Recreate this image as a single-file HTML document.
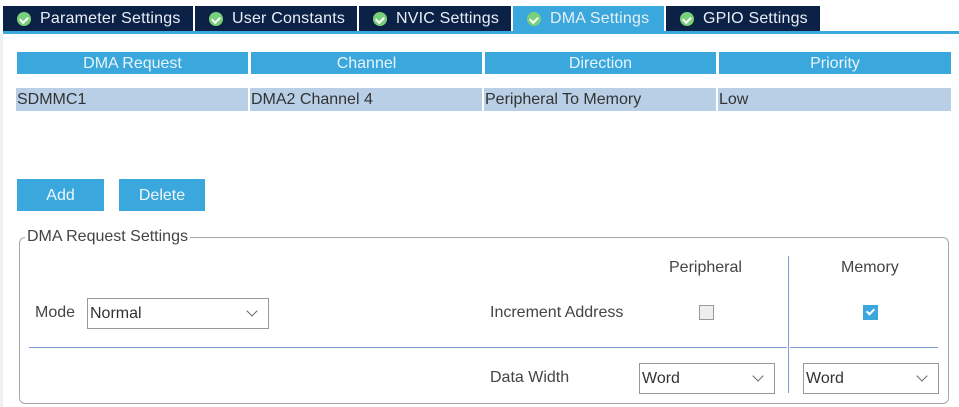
<!DOCTYPE html>
<html><head><meta charset="utf-8"><style>
*{box-sizing:border-box;margin:0;padding:0}
body{width:959px;height:407px;background:#fff;font-family:"Liberation Sans",sans-serif;position:relative;overflow:hidden;color:#333}
.a{position:absolute}
.tab{position:absolute;top:6px;height:26px;background:#0b2146;color:#e8eef5;font-size:16px;line-height:25px;padding-left:37px;white-space:nowrap;letter-spacing:0.2px}
.tab.act{background:#3aa8dc}
.ic{position:absolute;left:14px;top:6px;width:14px;height:14px;border-radius:50%;background:#7ad07a}
.ic::after{content:"";position:absolute;left:4px;top:2.5px;width:3.5px;height:6px;border:solid #fff;border-width:0 2px 2px 0;transform:rotate(45deg)}
.th{position:absolute;top:52px;height:22px;background:#3aa8dc;color:#e8f4fb;font-size:16px;line-height:23px;text-align:center}
.td{position:absolute;top:88px;height:23px;background:#b8cfe6;color:#333;font-size:16px;line-height:24px;padding-left:1px}
.btn{position:absolute;top:179px;height:32px;background:#3aa8dc;color:#eef7fc;font-size:16px;line-height:33px;text-align:center}
.t{position:absolute;font-size:16px;color:#444;white-space:nowrap}
.sel{position:absolute;border:1px solid #999;background:#fff;font-size:16px;color:#333;line-height:29px;padding-left:2px}
.sel::after{content:"";position:absolute;right:12px;top:8px;width:7px;height:7px;border:solid #666;border-width:0 1.3px 1.3px 0;transform:rotate(45deg)}
</style></head><body>
<div class="a" style="left:0;top:34px;width:3px;height:373px;background:#eef0f3"></div>
<div class="tab" style="left:3px;width:190px"><span class="ic"></span>Parameter Settings</div>
<div class="tab" style="left:195px;width:162px"><span class="ic"></span>User Constants</div>
<div class="tab" style="left:359px;width:152px"><span class="ic"></span>NVIC Settings</div>
<div class="tab act" style="left:513px;width:151px"><span class="ic"></span>DMA Settings</div>
<div class="tab" style="left:666px;width:154px"><span class="ic"></span>GPIO Settings</div>
<div class="a" style="left:3px;top:31px;width:956px;height:3px;background:#3aa8dc"></div>

<div class="th" style="left:17px;width:231px">DMA Request</div>
<div class="th" style="left:251px;width:231px">Channel</div>
<div class="th" style="left:485px;width:231px">Direction</div>
<div class="th" style="left:719px;width:232px">Priority</div>
<div class="td" style="left:16px;width:232px">SDMMC1</div>
<div class="td" style="left:250px;width:232px">DMA2 Channel 4</div>
<div class="td" style="left:484px;width:232px">Peripheral To Memory</div>
<div class="td" style="left:718px;width:233px">Low</div>

<div class="btn" style="left:17px;width:87px">Add</div>
<div class="btn" style="left:119px;width:86px">Delete</div>

<div class="a" style="left:19px;top:237px;width:930px;height:167px;border:1px solid #a8a8a8;border-radius:6px"></div>
<div class="t" style="left:25px;top:228px;background:#fff;padding:0 2px">DMA Request Settings</div>

<div class="t" style="left:35px;top:304px">Mode</div>
<div class="sel" style="left:87px;top:298px;width:182px;height:31px">Normal</div>

<div class="t" style="left:669px;top:259px">Peripheral</div>
<div class="t" style="left:841px;top:259px">Memory</div>
<div class="t" style="left:490px;top:304px">Increment Address</div>
<div class="a" style="left:699px;top:305px;width:15px;height:15px;border:1px solid #999;background:#eceef0"></div>
<div class="a" style="left:863px;top:305px;width:15px;height:15px;background:#3aa8dc"></div>
<div class="a" style="left:868px;top:307px;width:5px;height:8px;border:solid #fff;border-width:0 2px 2px 0;transform:rotate(45deg)"></div>

<div class="a" style="left:788px;top:256px;width:1px;height:137px;background:#7f9fd4"></div>
<div class="a" style="left:29px;top:347px;width:758px;height:1px;background:#7f9fd4"></div>
<div class="a" style="left:790px;top:347px;width:148px;height:1px;background:#7f9fd4"></div>

<div class="t" style="left:490px;top:369px">Data Width</div>
<div class="sel" style="left:639px;top:363px;width:136px;height:31px">Word</div>
<div class="sel" style="left:803px;top:363px;width:136px;height:31px">Word</div>
</body></html>
